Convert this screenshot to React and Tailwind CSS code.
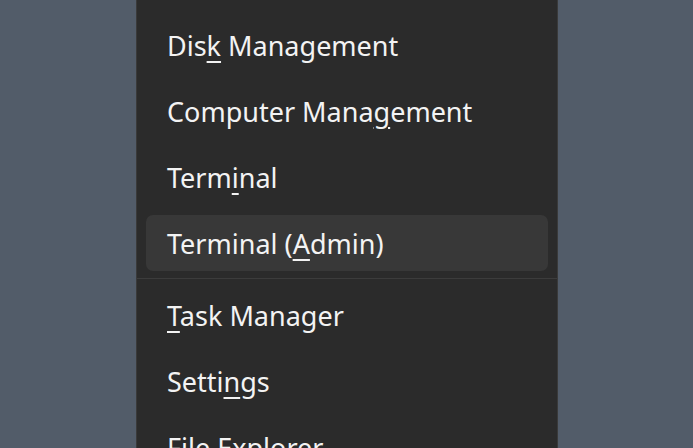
import React from "react";

const items = [
    { pre: "Dis", key: "k", post: " Management" },
    { pre: "Computer Mana", key: "g", post: "ement" },
    { pre: "Term", key: "i", post: "nal" },
    { pre: "Terminal (", key: "A", post: "dmin)", active: true },
    "sep",
    { pre: "", key: "T", post: "ask Manager" },
    { pre: "Setti", key: "n", post: "gs" },
    { pre: "", key: "F", post: "ile Explorer" },
];

const MenuItem = ({ item }) => (
    <div className="h-[66px] px-[9px] py-[5px]">
        <div className={`h-full rounded-[7px] pl-[21px] flex items-center ${item.active ? "bg-[#383838]" : ""}`}>
            <span className="text-[27px] leading-none text-[#f3f3f3] whitespace-nowrap">
                {item.pre}
                <span className="underline decoration-2 underline-offset-[5px]">{item.key}</span>
                {item.post}
            </span>
        </div>
    </div>
);

export default function App() {
    return (
        <div
            className="h-[448px] w-[693px] overflow-hidden bg-[#525c69] flex"
            style={{ fontFamily: '"Noto Sans", "Open Sans", sans-serif' }}
        >
            <div className="ml-[136px] w-[422px] h-full bg-[#2b2b2b] border-x border-[#3a3a3a] pt-[12px]">
                {items.map((item, i) =>
                    item === "sep" ? (
                        <div key={i} className="h-[6px] pt-[2px]">
                            <div className="h-px bg-[#3c3c3c]" />
                        </div>
                    ) : (
                        <MenuItem key={i} item={item} />
                    )
                )}
            </div>
        </div>
    );
}
